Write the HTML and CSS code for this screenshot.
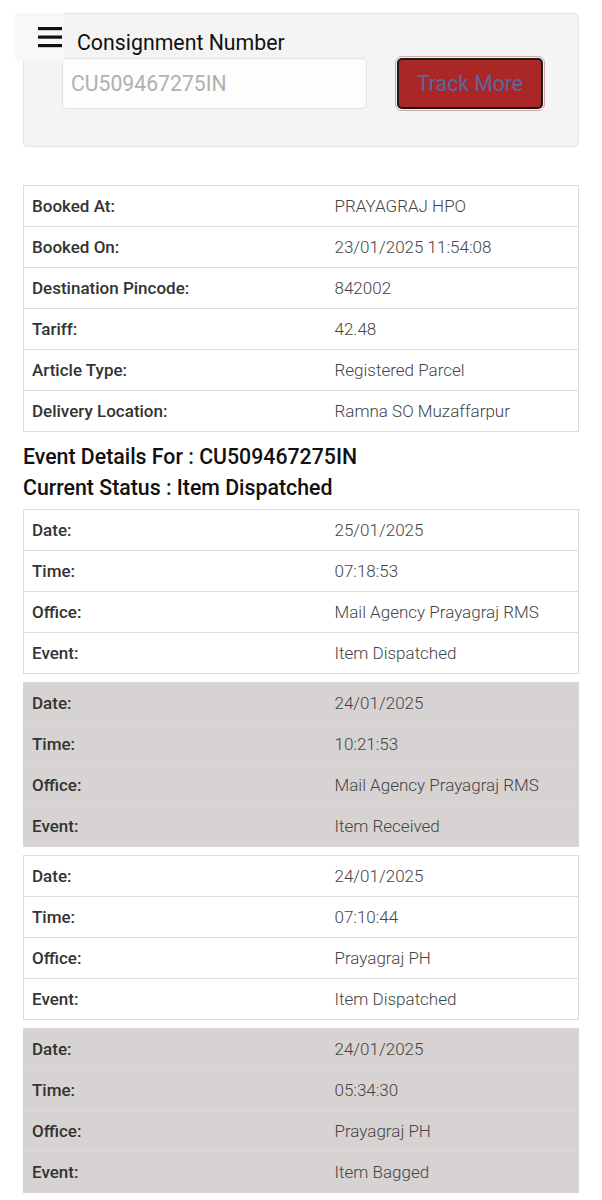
FILE: index.html
```html
<!DOCTYPE html>
<html lang="en">
<head>
  <meta charset="UTF-8" />
  <title>Track Consignment</title>
  <link rel="stylesheet" href="styles.css">
</head>
<body>

  <div class="page">

    <div class="search-panel">
      <button class="menu-btn" aria-label="Menu">
        <svg width="24" height="22" viewBox="0 0 24 22">
          <rect x="0" y="1" width="24" height="3.2" fill="#111"/>
          <rect x="0" y="9.5" width="24" height="3.2" fill="#111"/>
          <rect x="0" y="18" width="24" height="3.2" fill="#111"/>
        </svg>
      </button>
      <label class="search-label" for="consignment">Consignment Number</label>
      <div class="search-row">
        <input id="consignment" class="search-input" type="text" placeholder="CU509467275IN">
        <button class="track-btn">Track More</button>
      </div>
    </div>

    <table class="info-table">
      <tr><th>Booked At:</th><td>PRAYAGRAJ HPO</td></tr>
      <tr><th>Booked On:</th><td>23/01/2025 11:54:08</td></tr>
      <tr><th>Destination Pincode:</th><td>842002</td></tr>
      <tr><th>Tariff:</th><td>42.48</td></tr>
      <tr><th>Article Type:</th><td>Registered Parcel</td></tr>
      <tr><th>Delivery Location:</th><td>Ramna SO Muzaffarpur</td></tr>
    </table>

    <h3 class="event-title">Event Details For : CU509467275IN</h3>
    <h3 class="event-title">Current Status : Item Dispatched</h3>

    <div id="events"></div>

  </div>

  <script>
    const events = [
      { date: '25/01/2025', time: '07:18:53', office: 'Mail Agency Prayagraj RMS', event: 'Item Dispatched' },
      { date: '24/01/2025', time: '10:21:53', office: 'Mail Agency Prayagraj RMS', event: 'Item Received' },
      { date: '24/01/2025', time: '07:10:44', office: 'Prayagraj PH', event: 'Item Dispatched' },
      { date: '24/01/2025', time: '05:34:30', office: 'Prayagraj PH', event: 'Item Bagged' }
    ];

    const box = document.getElementById('events');
    events.forEach((e, i) => {
      const t = document.createElement('table');
      t.className = 'info-table event-table' + (i % 2 ? ' shaded' : '');
      t.innerHTML =
        `<tr><th>Date:</th><td>${e.date}</td></tr>` +
        `<tr><th>Time:</th><td>${e.time}</td></tr>` +
        `<tr><th>Office:</th><td>${e.office}</td></tr>` +
        `<tr><th>Event:</th><td>${e.event}</td></tr>`;
      box.appendChild(t);
    });
  </script>

</body>
</html>
```

FILE: styles.css
```css
body {
  margin: 0;
  font-family: Roboto, "Liberation Sans", sans-serif;
  background: #fff;
  color: #222;
}
.page {
  padding: 13px 23px 0 23px;
}
.search-panel {
  position: relative;
  height: 134px;
  box-sizing: border-box;
  background: #f4f4f4;
  border: 1px solid #e4e4e4;
  border-radius: 4px;
  padding: 14px 0 0 38px;
}
.menu-btn {
  position: absolute;
  left: -9px;
  top: -1px;
  width: 49px;
  height: 48px;
  background: #f8f8f8;
  border: none;
  padding: 0 0 1px 23px;
  display: flex;
  align-items: center;
  justify-content: flex-start;
}
.search-label {
  display: block;
  margin-left: 15px;
  font-size: 21.3px;
  line-height: 30px;
  color: #111;
}
.search-row {
  display: flex;
  align-items: center;
}
.search-input {
  width: 305px;
  height: 51px;
  box-sizing: border-box;
  border: 1px solid #e2e2e2;
  border-radius: 5px;
  background: #fdfdfd;
  padding: 0 8px;
  font-family: inherit;
  font-size: 21.2px;
}
.search-input::placeholder {
  color: #b0b0b0;
}
.track-btn {
  margin-left: 30px;
  width: 146px;
  height: 51px;
  background: #ab2727;
  border: 2px solid #1a1a1a;
  border-radius: 5px;
  outline: 1px solid #caa;
  outline-offset: 1px;
  color: #5b66a0;
  font-family: inherit;
  font-size: 21.2px;
  cursor: pointer;
}
.info-table {
  width: 100%;
  border-collapse: collapse;
  margin-top: 38px;
  font-size: 17px;
  border: 1px solid #dcdcdc;
}
.info-table th,
.info-table td {
  height: 41px;
  box-sizing: border-box;
  border-top: 1px solid #dcdcdc;
  padding: 0 8px;
  text-align: left;
}
.info-table th {
  width: 303px;
  font-weight: 500;
  color: #333;
}
.info-table td {
  font-weight: 300;
  color: #444;
}
.event-title {
  margin: 0;
  font-size: 21.3px;
  font-weight: 500;
  color: #111;
  line-height: 31px;
}
.info-table + .event-title {
  margin-top: 9px;
}
#events {
  margin-top: 6px;
}
.event-table {
  margin-top: 0;
  margin-bottom: 8px;
}
.event-table.shaded {
  background: #d6d3d2;
  border-color: #d6d3d2;
}
.event-table.shaded th,
.event-table.shaded td {
  border-top-color: #dcdad9;
}
```
